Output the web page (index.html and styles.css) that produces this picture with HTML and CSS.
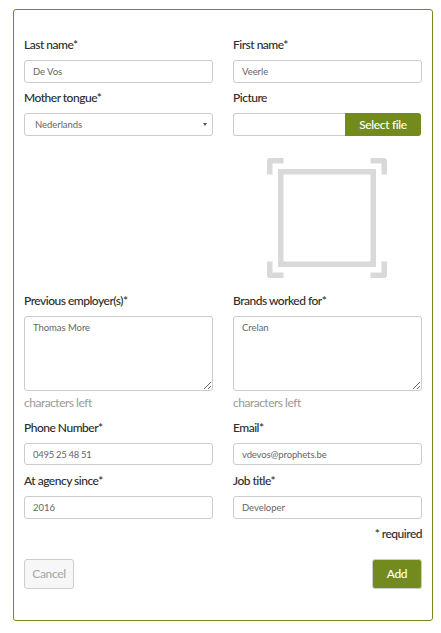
FILE: index.html
```html
<!DOCTYPE html>
<html lang="en">
<head>
<meta charset="utf-8">
<title>Add person</title>
<link rel="stylesheet" href="styles.css">
</head>
<body>
<form class="panel">
  <div class="grid">
    <div class="field"><label for="last">Last name*</label><input id="last" type="text" value="De Vos"></div>
    <div class="field"><label for="first">First name*</label><input id="first" type="text" value="Veerle"></div>
    <div class="field"><label for="tongue">Mother tongue*</label>
      <div class="select" id="tongue"><span>Nederlands</span><svg width="4" height="3" viewBox="0 0 4 3"><path d="M0 0h4L2 3z" fill="#555"/></svg></div></div>
    <div class="field"><label for="picture">Picture</label>
      <div class="file"><input id="picture" type="text"><button type="button" class="select-file">Select file</button></div></div>
  </div>
  <div class="preview">
    <svg width="120" height="120" viewBox="0 0 120 120" fill="#d9d9d9">
      <path d="M11 11H109V109H11ZM16.500 16.500V103.500H103.500V16.500Z" fill-rule="evenodd"/>
      <path d="M0 16.500V3Q0 0 3 0H16.500V5.500H5.500V16.500ZM120 16.500V3Q120 0 117 0H103.500V5.500H114.500V16.500ZM0 103.500V117Q0 120 3 120H16.500V114.500H5.500V103.500ZM120 103.500V117Q120 120 117 120H103.500V114.500H114.500V103.500Z"/>
    </svg>
  </div>
  <div class="grid">
    <div class="field area"><label for="employers">Previous employer(s)*</label><textarea id="employers">Thomas More</textarea><p class="hint">characters left</p></div>
    <div class="field area"><label for="brands">Brands worked for*</label><textarea id="brands">Crelan</textarea><p class="hint">characters left</p></div>
    <div class="field"><label for="phone">Phone Number*</label><input id="phone" class="short digits" type="text" value="0495 25 48 51"></div>
    <div class="field"><label for="email">Email*</label><input id="email" class="short email" type="text" value="vdevos@prophets.be"></div>
    <div class="field"><label for="since">At agency since*</label><input id="since" type="text" value="2016"></div>
    <div class="field"><label for="job">Job title*</label><input id="job" type="text" value="Developer"></div>
  </div>
  <p class="required">* required</p>
  <div class="actions"><button type="button" class="cancel">Cancel</button><button type="button" class="add">Add</button></div>
</form>
</body>
</html>
```
FILE: styles.css
```css
* { box-sizing: border-box; }
body { margin: 0; padding: 9px 8px 0 13px; background: #fff; color: #2b2b2b; font: 500 12px/22px Lato, sans-serif; letter-spacing: -0.5px; }
.panel { height: 612px; padding: 24px 10px 0; border: 1px solid #738a1e; border-radius: 3px; }
.grid { display: grid; grid-template-columns: 189px 189px; column-gap: 20px; }
.field { display: flex; flex-direction: column; height: 53px; min-width: 0; }
.field label { height: 22px; margin-bottom: 4px; }
input, textarea, .select { width: 100%; margin: 0; border: 1px solid #ccc; border-radius: 3px; background: #fff; color: #666; font: 400 9.5px/13px Lato, sans-serif; letter-spacing: -0.05px; outline: 0; }
input { height: 23px; padding: 0 8px; }
.short { height: 22px; }
.digits { letter-spacing: -0.3px; }
.email { letter-spacing: -0.13px; }
.select { display: flex; align-items: center; justify-content: space-between; height: 23px; padding: 0 5px 0 10px; }
.file { display: flex; width: 188px; }
.file input { flex: 1; min-width: 0; border-right: 0; border-radius: 3px 0 0 3px; }
button { margin: 0; font: 500 12px/16px Lato, sans-serif; letter-spacing: -0.35px; }
.select-file { width: 76px; height: 23px; padding: 0; border: 0; border-radius: 0 3px 3px 0; background: #738a1e; color: #fff; }
.preview { display: flex; justify-content: center; width: 187px; height: 150px; margin-left: 209px; padding-top: 18px; }
.area { height: 127px; }
textarea { display: block; flex: none; height: 75px; padding: 4px 8px; resize: both; }
.hint { height: 22px; margin: 1px 0 0; color: #999; font-weight: 400; }
.required { margin: 0; text-align: right; }
.actions { display: flex; justify-content: space-between; margin-top: 14px; }
.actions button { height: 30px; padding: 0; border: 1px solid #ccc; border-radius: 3px; }
.actions .cancel { width: 50px; background: #f7f7f7; color: #aaa; }
.actions .add { width: 50px; background: #738a1e; color: #fff; }
```
